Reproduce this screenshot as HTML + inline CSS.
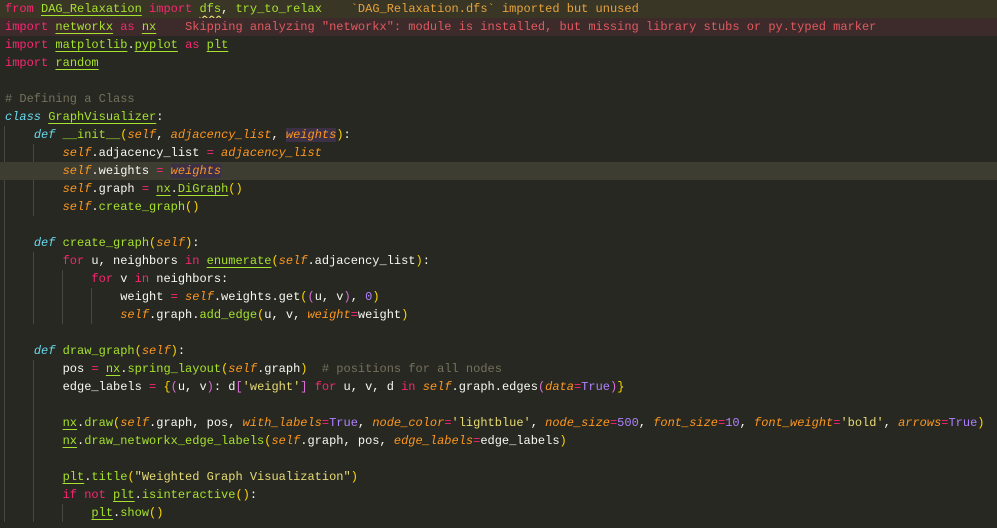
<!DOCTYPE html>
<html><head><meta charset="utf-8"><style>
html,body{margin:0;padding:0;background:#272822;width:997px;height:528px;overflow:hidden}
.ed{position:relative;font-family:"Liberation Mono",monospace;font-size:12px;color:#f8f8f2}
.l{height:18px;line-height:18px;white-space:pre;padding-left:5px;position:relative}
.k{color:#f92672}.g{color:#a6e22e}.u{text-decoration:underline;text-decoration-color:#a6e22e;text-underline-offset:3px}
.b{color:#66d9ef;font-style:italic}.p{color:#fd971f;font-style:italic}.s{color:#e6db74}.c{color:#75715e}.n{color:#ae81ff}
.y{color:#ffd700}.v{color:#da70d6}
.w1{background:#3a3626}.w2{background:#3d2b2c}.hl{background:#3e3d32}
.hw{background:#3b3046}
.guide{position:absolute;width:1px;background:#464741}
</style></head><body><div class="ed">
<div class="guide" style="left:4px;top:126px;height:396px"></div>
<div class="guide" style="left:33px;top:144px;height:72px"></div>
<div class="guide" style="left:33px;top:252px;height:72px"></div>
<div class="guide" style="left:62px;top:270px;height:54px"></div>
<div class="guide" style="left:91px;top:288px;height:36px"></div>
<div class="guide" style="left:33px;top:360px;height:162px"></div>
<div class="guide" style="left:62px;top:504px;height:18px"></div>
<div class="l w1"><span class="k">from</span> <span class="g u">DAG_Relaxation</span> <span class="k">import</span> <span class="g" style="text-decoration:underline wavy #e6db74;text-underline-offset:3px">dfs</span>, <span class="g">try_to_relax</span>    <span style="color:#e6a23c">`DAG_Relaxation.dfs` imported but unused</span></div>
<div class="l w2"><span class="k">import</span> <span class="g u">networkx</span> <span class="k">as</span> <span class="g u">nx</span>    <span style="color:#e0595f">Skipping analyzing "networkx": module is installed, but missing library stubs or py.typed marker</span></div>
<div class="l"><span class="k">import</span> <span class="g u">matplotlib</span>.<span class="g u">pyplot</span> <span class="k">as</span> <span class="g u">plt</span></div>
<div class="l"><span class="k">import</span> <span class="g u">random</span></div>
<div class="l"> </div>
<div class="l"><span class="c"># Defining a Class</span></div>
<div class="l"><span class="b">class</span> <span class="g u">GraphVisualizer</span>:</div>
<div class="l">    <span class="b">def</span> <span class="g">__init__</span><span class="y">(</span><span class="p">self</span>, <span class="p">adjacency_list</span>, <span class="p hw">weights</span><span class="y">)</span>:</div>
<div class="l">        <span class="p">self</span>.adjacency_list <span class="k">=</span> <span class="p">adjacency_list</span></div>
<div class="l hl">        <span class="p">self</span>.weights <span class="k">=</span> <span class="p hw">weights</span></div>
<div class="l">        <span class="p">self</span>.graph <span class="k">=</span> <span class="g u">nx</span>.<span class="g u">DiGraph</span><span class="y">()</span></div>
<div class="l">        <span class="p">self</span>.<span class="g">create_graph</span><span class="y">()</span></div>
<div class="l"> </div>
<div class="l">    <span class="b">def</span> <span class="g">create_graph</span><span class="y">(</span><span class="p">self</span><span class="y">)</span>:</div>
<div class="l">        <span class="k">for</span> u, neighbors <span class="k">in</span> <span class="g u">enumerate</span><span class="y">(</span><span class="p">self</span>.adjacency_list<span class="y">)</span>:</div>
<div class="l">            <span class="k">for</span> v <span class="k">in</span> neighbors:</div>
<div class="l">                weight <span class="k">=</span> <span class="p">self</span>.weights.get<span class="y">(</span><span class="v">(</span>u, v<span class="v">)</span>, <span class="n">0</span><span class="y">)</span></div>
<div class="l">                <span class="p">self</span>.graph.<span class="g">add_edge</span><span class="y">(</span>u, v, <span class="p">weight</span><span class="k">=</span>weight<span class="y">)</span></div>
<div class="l"> </div>
<div class="l">    <span class="b">def</span> <span class="g">draw_graph</span><span class="y">(</span><span class="p">self</span><span class="y">)</span>:</div>
<div class="l">        pos <span class="k">=</span> <span class="g u">nx</span>.<span class="g">spring_layout</span><span class="y">(</span><span class="p">self</span>.graph<span class="y">)</span>  <span class="c"># positions for all nodes</span></div>
<div class="l">        edge_labels <span class="k">=</span> <span class="y">{</span><span class="v">(</span>u, v<span class="v">)</span>: d<span class="v">[</span><span class="s">'weight'</span><span class="v">]</span> <span class="k">for</span> u, v, d <span class="k">in</span> <span class="p">self</span>.graph.edges<span class="v">(</span><span class="p">data</span><span class="k">=</span><span class="n">True</span><span class="v">)</span><span class="y">}</span></div>
<div class="l"> </div>
<div class="l">        <span class="g u">nx</span>.<span class="g">draw</span><span class="y">(</span><span class="p">self</span>.graph, pos, <span class="p">with_labels</span><span class="k">=</span><span class="n">True</span>, <span class="p">node_color</span><span class="k">=</span><span class="s">'lightblue'</span>, <span class="p">node_size</span><span class="k">=</span><span class="n">500</span>, <span class="p">font_size</span><span class="k">=</span><span class="n">10</span>, <span class="p">font_weight</span><span class="k">=</span><span class="s">'bold'</span>, <span class="p">arrows</span><span class="k">=</span><span class="n">True</span><span class="y">)</span></div>
<div class="l">        <span class="g u">nx</span>.<span class="g">draw_networkx_edge_labels</span><span class="y">(</span><span class="p">self</span>.graph, pos, <span class="p">edge_labels</span><span class="k">=</span>edge_labels<span class="y">)</span></div>
<div class="l"> </div>
<div class="l">        <span class="g u">plt</span>.<span class="g">title</span><span class="y">(</span><span class="s">"Weighted Graph Visualization"</span><span class="y">)</span></div>
<div class="l">        <span class="k">if not</span> <span class="g u">plt</span>.<span class="g">isinteractive</span><span class="y">()</span>:</div>
<div class="l">            <span class="g u">plt</span>.<span class="g">show</span><span class="y">()</span></div>
</div></body></html>
